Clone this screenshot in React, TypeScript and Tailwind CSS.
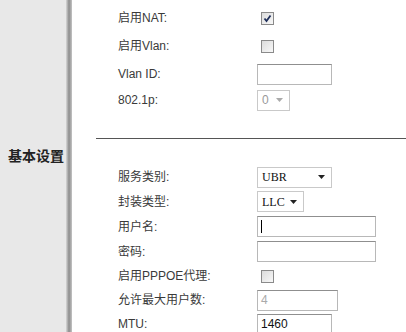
const font = { fontFamily: '"Liberation Sans", "Noto Sans CJK SC", sans-serif' };

function Check({ checked }: { checked?: boolean }) {
  return (
    <div className="ml-[4px] w-[13px] h-[13px] border border-[#8a8a8a] bg-gradient-to-br from-[#dcdcdc] to-[#f8f8f8] flex items-center justify-center">
      {checked && (
        <svg width="9" height="9" viewBox="0 0 9 9">
          <path d="M1.5 4.5 L3.5 7 L7.5 1.5" stroke="#1f2f5a" strokeWidth="1.8" fill="none" />
        </svg>
      )}
    </div>
  );
}

function Select({ value, w, disabled, serif }: { value: string; w: string; disabled?: boolean; serif?: boolean }) {
  return (
    <div
      className={`${w} h-[21px] border border-[#c9c9c9] bg-white flex items-center justify-between pl-[4px] pr-[6px] text-[12px] ${
        disabled ? "text-[#999]" : "text-[#111]"
      }`}
      style={serif ? { fontFamily: '"Liberation Serif", "Noto Serif CJK SC", serif' } : undefined}
    >
      <span>{value}</span>
      <svg width="7" height="4" viewBox="0 0 7 4">
        <path d="M0 0 H7 L3.5 4 Z" fill={disabled ? "#aaa" : "#222"} />
      </svg>
    </div>
  );
}

function Input({ w, value, disabled, cursor }: { w: string; value?: string; disabled?: boolean; cursor?: boolean }) {
  return (
    <div
      className={`${w} h-[21px] border border-[#b8b8b8] border-t-[#8f8f8f] bg-white flex items-center pl-[3px] text-[12px] ${
        disabled ? "text-[#aaa]" : "text-[#111]"
      }`}
    >
      {cursor && <div className="w-[1px] h-[13px] bg-black" />}
      {value}
    </div>
  );
}

function Row({ label, h, children }: { label: string; h: string; children?: React.ReactNode }) {
  return (
    <div className={`${h} shrink-0 flex items-center`}>
      <div className="w-[139px] text-[12px] text-[#3a3a3a]">{label}</div>
      {children}
    </div>
  );
}

export default function App() {
  return (
    <div className="w-[406px] h-[332px] flex bg-white overflow-hidden" style={font}>
      <div className="w-[66px] shrink-0 bg-[#e8e8e8] pt-[146px] pl-[8px]">
        <div className="text-[14px] font-bold text-[#222] whitespace-nowrap">基本设置</div>
      </div>
      <div className="w-[6px] shrink-0 bg-gradient-to-r from-[#d8d8d8] via-[#8c8c8c] to-[#c4c4c4]" />
      <div className="flex-1 flex flex-col pt-[4px]">
        <div className="pl-[46px] shrink-0">
          <Row label="启用NAT:" h="h-[28px]">
            <Check checked />
          </Row>
          <Row label="启用Vlan:" h="h-[28px]">
            <Check />
          </Row>
          <Row label="Vlan ID:" h="h-[28px]">
            <Input w="w-[75px]" />
          </Row>
          <Row label="802.1p:" h="h-[24px]">
            <Select value="0" w="w-[33px]" disabled />
          </Row>
        </div>
        <div className="ml-[24px] mt-[26px] h-[1px] shrink-0 bg-[#555]" />
        <div className="pl-[46px] pt-[26px] shrink-0">
          <Row label="服务类别:" h="h-[24px]">
            <Select value="UBR" w="w-[75px]" serif />
          </Row>
          <Row label="封装类型:" h="h-[25px]">
            <Select value="LLC" w="w-[47px]" serif />
          </Row>
          <Row label="用户名:" h="h-[25px]">
            <Input w="w-[119px]" cursor />
          </Row>
          <Row label="密码:" h="h-[25px]">
            <Input w="w-[119px]" />
          </Row>
          <Row label="启用PPPOE代理:" h="h-[24px]">
            <Check />
          </Row>
          <Row label="允许最大用户数:" h="h-[24px]">
            <Input w="w-[81px]" value="4" disabled />
          </Row>
          <Row label="MTU:" h="h-[24px]">
            <Input w="w-[75px]" value="1460" />
          </Row>
        </div>
      </div>
    </div>
  );
}
